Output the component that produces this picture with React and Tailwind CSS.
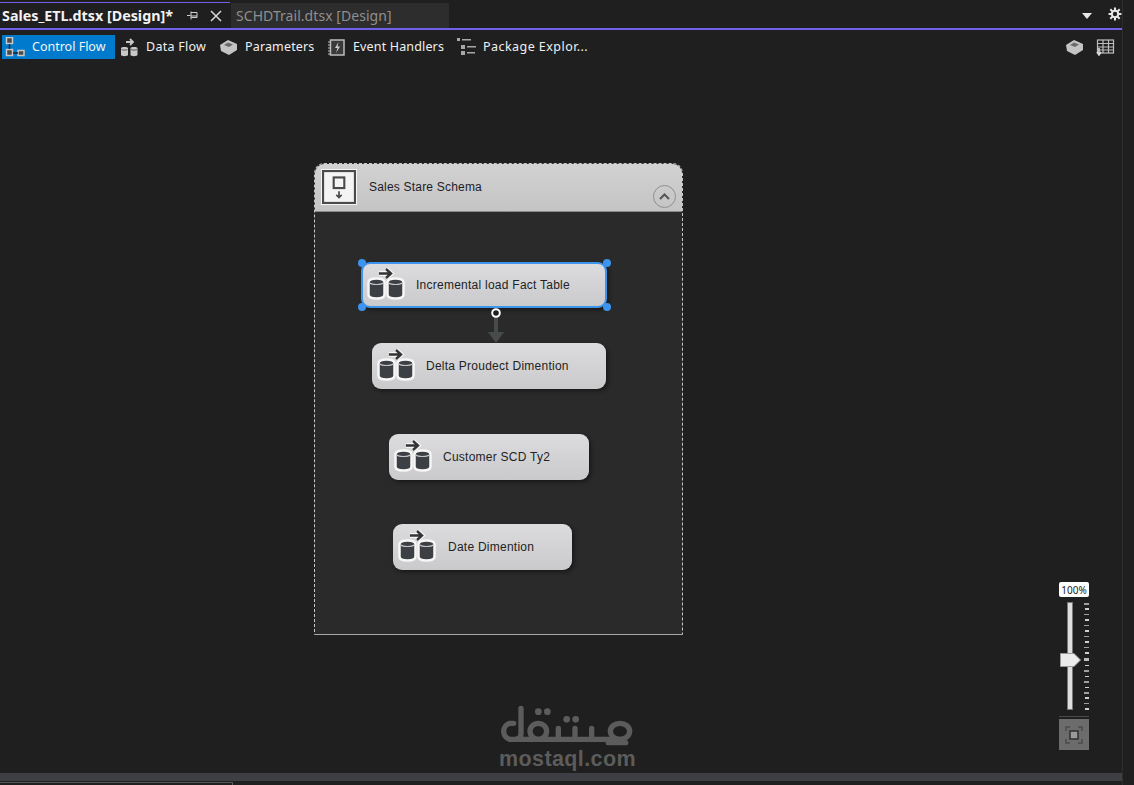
import React from "react";

const TaskIcon = () => (
  <svg width="38" height="36" viewBox="0 0 38 36" className="shrink-0">
    <g fill="#3c3f44" stroke="#f6f6f6" strokeWidth="2.500">
      <path d="M1.500 15.500c0-2.500 3.500-4 8-4s8 1.500 8 4v12c0 2.500-3.500 4-8 4s-8-1.500-8-4z" />
      <path d="M20.500 15.500c0-2.500 3.500-4 8-4s8 1.500 8 4v12c0 2.500-3.500 4-8 4s-8-1.500-8-4z" />
    </g>
    <path d="M3 16c2 2 11 2 13 0M22 16c2 2 11 2 13 0" stroke="#c4c4c8" strokeWidth="1.200" fill="none" />
    <path d="M12 6.500h12M19 2L24 6.500l-5 4.500" stroke="#f4f4f4" strokeWidth="5" fill="none" />
    <path d="M12 6.500h12M19 2L24 6.500l-5 4.500" stroke="#333" strokeWidth="2.400" fill="none" />
  </svg>
);

const Node = ({ left, top, width, textLeft, label, selected }) => (
  <div
    className={`absolute h-[46px] rounded-[9px] bg-gradient-to-b from-[#dcdcde] to-[#cacacc] flex items-center shadow-[2px_2px_4px_rgba(0,0,0,0.45)] ${selected ? "border-2 border-[#3d94ee]" : ""}`}
    style={{ left, top, width }}
  >
    <div className={selected ? "ml-[4px]" : "ml-[5px]"}>
      <TaskIcon />
    </div>
    <span
      className="absolute text-[12px] tracking-[0.25px] text-[#222] font-['Liberation_Sans',sans-serif] whitespace-nowrap"
      style={{ left: textLeft }}
    >
      {label}
    </span>
    {selected && (
      <>
        <span className="absolute -left-[5px] -top-[5px] w-[8px] h-[8px] rounded-full bg-[#3d94ee]" />
        <span className="absolute -right-[6px] -top-[5px] w-[8px] h-[8px] rounded-full bg-[#3d94ee]" />
        <span className="absolute -left-[5px] -bottom-[5px] w-[8px] h-[8px] rounded-full bg-[#3d94ee]" />
        <span className="absolute -right-[6px] -bottom-[5px] w-[8px] h-[8px] rounded-full bg-[#3d94ee]" />
      </>
    )}
  </div>
);

const ControlFlowIcon = () => (
  <svg width="20" height="20" viewBox="0 0 20 20" fill="none" stroke="#c9c9c9" strokeWidth="1.500">
    <rect x="1.500" y="0.500" width="6" height="6" fill="#4a4a4a" />
    <rect x="1.500" y="12.500" width="6" height="6" fill="#4a4a4a" />
    <rect x="13" y="13.500" width="6" height="5" fill="#4a4a4a" />
    <path d="M4.500 7v5M8 16h5" stroke="#222" />
  </svg>
);
const DataFlowIcon = () => (
  <svg width="19" height="19" viewBox="0 0 19 19">
    <path d="M1 10c0-1.500 7-1.500 7 0v7c0 1.500-7 1.500-7 0zM10.500 10c0-1.500 7-1.500 7 0v7c0 1.500-7 1.500-7 0z" fill="#c8c8c8" />
    <path d="M1.500 11.500c1 .8 5 .8 6 0M11 11.500c1 .8 5 .8 6 0" stroke="#555" fill="none" />
    <path d="M6 4h7M10 1l3 3-3 3" stroke="#c8c8c8" strokeWidth="1.800" fill="none" />
  </svg>
);
const BoxIcon = () => (
  <svg width="19" height="17" viewBox="0 0 19 17">
    <path d="M1 6l8-5 9 4v6l-8 5-8-4z" fill="#c4c4c4" />
    <path d="M5 6l4-2.500L14 5.500 10 8z" fill="#6a6a6a" />
  </svg>
);
const EventIcon = () => (
  <svg width="17" height="17" viewBox="0 0 17 17">
    <rect x="2.500" y="1" width="13.500" height="15" fill="#3a3a3a" stroke="#bdbdbd" strokeWidth="1.500" />
    <path d="M0 3h3M0 6h3M0 9h3M0 12h3M0 15h3" stroke="#bdbdbd" />
    <path d="M10.500 3L7 9h2.500L8 14l4-6.500H9.500z" fill="#d0d0d0" />
  </svg>
);
const ExplorerIcon = () => (
  <svg width="19" height="18" viewBox="0 0 19 18" fill="#a8a8a8">
    <rect x="0" y="0" width="3" height="3" />
    <rect x="5" y="1" width="9" height="1.500" />
    <rect x="4" y="7" width="4" height="4" />
    <rect x="10" y="8" width="9" height="1.500" />
    <rect x="4" y="13" width="4" height="4" />
    <rect x="10" y="14" width="8" height="1.500" />
  </svg>
);
const GridIcon = () => (
  <svg width="19" height="17" viewBox="0 0 19 17" fill="none" stroke="#bdbdbd" strokeWidth="1.200">
    <rect x="1.500" y="1" width="16" height="13" />
    <path d="M1.500 4.500h16M1.500 8h16M1.500 11h16M7 1v13M12.500 1v13" />
    <path d="M3 9v7M1 13l2 3 2-3" stroke="#d8d8d8" strokeWidth="1.600" />
  </svg>
);

const ToolItem = ({ icon, label, width, textGap, iconWidth, track }) => (
  <div className="flex items-center h-[24px]" style={{ width }}>
    <div className="flex items-center justify-center shrink-0" style={{ width: iconWidth, marginRight: textGap }}>
      {icon}
    </div>
    <span className="text-[12.5px] text-[#f0f0f0] whitespace-nowrap" style={{ letterSpacing: track }}>
      {label}
    </span>
  </div>
);

const ticks = Array.from({ length: 20 }, (_, i) => i);

export default function App() {
  return (
    <div className="w-[1134px] h-[785px] overflow-hidden bg-[#1f1f1f] flex font-['Noto_Sans',sans-serif]">
      <div className="w-[1123px] h-full flex flex-col border-r border-[#2e2e2e] shrink-0">
        {/* Tab strip */}
        <div className="h-[30px] shrink-0 flex items-stretch border-b-2 border-[#7160e8] relative">
          <div className="w-[230px] border-t border-[#7160e8] mt-[2px] flex items-center relative">
            <span className="ml-[2px] text-[14.300px] font-bold text-[#f2f2f2] whitespace-nowrap">
              Sales_ETL.dtsx [Design]*
            </span>
            <svg className="absolute left-[187px] top-[7px]" width="12" height="11" viewBox="0 0 12 11" stroke="#cfcfcf" fill="none">
              <path d="M0 5.500h3.500M4 1.500v8M4 2.500h6v5H4M4 6h6" />
            </svg>
            <svg className="absolute left-[210px] top-[7px]" width="12" height="12" viewBox="0 0 12 12" stroke="#d8d8d8" strokeWidth="1.500">
              <path d="M1 1l10 10M11 1L1 11" />
            </svg>
          </div>
          <div className="ml-[1px] w-[218px] mt-[3px] bg-[#2d2d2d] flex items-center">
            <span className="ml-[5px] text-[14px] tracking-[0.05px] text-[#8f8f8f] whitespace-nowrap">SCHDTrail.dtsx [Design]</span>
          </div>
          <div className="ml-auto flex items-center">
            <svg width="10" height="6" viewBox="0 0 10 6" className="mr-[16px] mt-[3px]">
              <path d="M0 0h10L5 6z" fill="#e8e8e8" />
            </svg>
            <svg width="14" height="14" viewBox="0 0 24 24" fill="none" stroke="#e8e8e8" strokeWidth="3.500">
              <circle cx="12" cy="12" r="5.500" />
              <path d="M12 1v5M12 18v5M1 12h5M18 12h5M4 4l3.500 3.500M16.500 16.500L20 20M20 4l-3.500 3.500M7.500 16.500L4 20" />
            </svg>
          </div>
        </div>

        {/* Designer toolbar */}
        <div className="h-[35px] shrink-0 flex items-start pt-[5px] pl-[2px]">
          <div className="w-[113px] mr-[5px]">
            <div className="h-[24px] bg-[#007acc] flex items-center">
              <div className="ml-[3px] mr-[7px] w-[20px] flex">
                <ControlFlowIcon />
              </div>
              <span className="text-[12.500px] text-[#f4f4f4] whitespace-nowrap">Control Flow</span>
            </div>
          </div>
          <ToolItem icon={<DataFlowIcon />} label="Data Flow" width={99} iconWidth={19} textGap={7} track="0.25px" />
          <ToolItem icon={<BoxIcon />} label="Parameters" width={109} iconWidth={19} textGap={7} track="0.15px" />
          <ToolItem icon={<EventIcon />} label="Event Handlers" width={129} iconWidth={17} textGap={8} track="0.15px" />
          <ToolItem icon={<ExplorerIcon />} label="Package Explor..." width={140} iconWidth={19} textGap={7} track="0.45px" />
          <div className="ml-auto mr-[7px] flex items-center h-[24px] gap-[12px]">
            <BoxIcon />
            <GridIcon />
          </div>
        </div>

        {/* Design surface */}
        <div className="flex-1 relative">
          {/* Sequence container */}
          <div className="absolute left-[314px] top-[98px] w-[369px] h-[472px] rounded-t-[10px] border border-dashed border-[#c8c8c8] [border-bottom-style:solid] border-b-[#a8a8a8] bg-[#2a2a2a]">
            <div className="h-[48px] rounded-t-[9px] bg-gradient-to-b from-[#d2d2d2] to-[#c4c4c4] flex items-center relative border-b border-[#8a8a8a]">
              <div className="ml-[6px] -mt-[1px] w-[36px] h-[36px] bg-[#f4f4f4] flex items-center justify-center">
                <svg width="34" height="34" viewBox="0 0 32 32" fill="none" stroke="#4a4a4a">
                  <rect x="1" y="1" width="30" height="30" strokeWidth="2" />
                  <rect x="11" y="7" width="10" height="10" strokeWidth="2" />
                  <path d="M16 20v6M13.500 23.500L16 26l2.500-2.500" strokeWidth="1.600" />
                </svg>
              </div>
              <span className="ml-[12px] -mt-[2px] text-[12px] tracking-[0.2px] font-['Liberation_Sans',sans-serif] text-[#1c1c28] whitespace-nowrap">Sales Stare Schema</span>
              <div className="absolute left-[338px] top-[21px] w-[23px] h-[23px] rounded-full border border-[#8f8f8f] flex items-center justify-center">
                <svg width="11" height="7" viewBox="0 0 11 7" fill="none" stroke="#555" strokeWidth="2">
                  <path d="M1 6l4.500-4.500L10 6" />
                </svg>
              </div>
            </div>
          </div>

          <Node left={361} top={197} width={246} textLeft={53} label="Incremental load Fact Table" selected />
          <Node left={372} top={278} width={234} textLeft={54} label="Delta Proudect Dimention" />
          <Node left={389} top={369} width={200} textLeft={54} label="Customer SCD Ty2" />
          <Node left={393} top={459} width={179} textLeft={55} label="Date Dimention" />

          {/* Connector */}
          <svg className="absolute left-[486px] top-[242px]" width="20" height="36" viewBox="0 0 20 36">
            <path d="M8 8h4v17h6l-8 11-8-11h6z" fill="#474c4a" />
            <circle cx="10" cy="6" r="3.800" fill="#1f1f1f" stroke="#fff" strokeWidth="2" />
          </svg>

          {/* Zoom control */}
          <div className="absolute left-[1059px] top-[517px] w-[30px] flex flex-col items-center">
            <div className="w-[30px] h-[15px] bg-white rounded-[2px] flex items-center justify-center text-[10px] leading-none text-[#222]">
              100%
            </div>
            <div className="w-[30px] h-[108px] mt-[5px] relative">
              <div className="absolute left-[8px] top-0 w-[6px] h-[108px] bg-[#dedede] border border-[#777]" />
              <div className="absolute left-[24px] top-[1px] h-[107px] w-[6px] flex flex-col justify-between items-end">
                {ticks.map((i) => (
                  <div key={i} className={i === 10 ? "h-[3px] w-[5px] bg-[#bdbdbd]" : i % 2 === 0 ? "h-[1.500px] w-[5px] bg-[#a0a0a0]" : "h-[1.500px] w-[4px] bg-[#d0d0d0]"} />
                ))}
              </div>
              <svg className="absolute left-[1px] top-[51px]" width="21" height="14" viewBox="0 0 21 14">
                <path d="M0.500 0.500H14L20.500 7 14 13.500H0.500z" fill="#ececec" stroke="#9a9a9a" />
              </svg>
            </div>
            <div className="w-[30px] h-px bg-[#4a4a4a] mt-[6px]" />
            <div className="w-[30px] h-[31px] mt-[2px] bg-[#6c6c6c] flex items-center justify-center">
              <svg width="18" height="18" viewBox="0 0 18 18" fill="none" stroke="#3a3a3a" strokeWidth="1.500">
                <path d="M1 5V1h4M13 1h4v4M17 13v4h-4M5 17H1v-4" stroke="#4b4b4b" />
                <rect x="5" y="5" width="8" height="8" fill="#9a9a9a" stroke="#2f2f2f" strokeWidth="1.500" />
              </svg>
            </div>
          </div>

          {/* Watermark */}
          <div className="absolute left-[495px] top-[635px] w-[145px] flex flex-col items-start">
            <svg width="145" height="50" viewBox="0 0 435 150" fill="none" stroke="#5c5c5c" strokeWidth="16" strokeLinecap="round" strokeLinejoin="round">
              <path d="M56 70H44A25 25 0 0 0 44 118H62Q78 118 78 100V25" />
              <path d="M62 118H375" />
              <ellipse cx="130" cy="94" rx="25" ry="24" />
              <path d="M190 118V85M240 118V85M290 118V85" />
              <ellipse cx="375" cy="94" rx="29" ry="24" />
              <path d="M340 128H392" />
              <circle cx="130" cy="35" r="10" fill="#5c5c5c" stroke="none" />
              <circle cx="157" cy="35" r="10" fill="#5c5c5c" stroke="none" />
              <circle cx="215" cy="58" r="10" fill="#5c5c5c" stroke="none" />
              <circle cx="242" cy="58" r="10" fill="#5c5c5c" stroke="none" />
            </svg>
            <span className="ml-[4px] -mt-[1px] text-[21.500px] leading-[20px] font-bold text-[#5c5c5c] font-['Liberation_Sans',sans-serif] tracking-[0.4px]">
              mostaql.com
            </span>
          </div>
        </div>

        {/* Horizontal scrollbar + bottom pane edge */}
        <div className="h-[8px] shrink-0 bg-[#3e3f44]" />
        <div className="h-[4px] shrink-0">
          <div className="w-[233px] h-[4px] mt-[1px] border-t border-r border-[#5a5a5a]" />
        </div>
      </div>
      <div className="flex-1 bg-[#1f1f1f]" />
    </div>
  );
}
